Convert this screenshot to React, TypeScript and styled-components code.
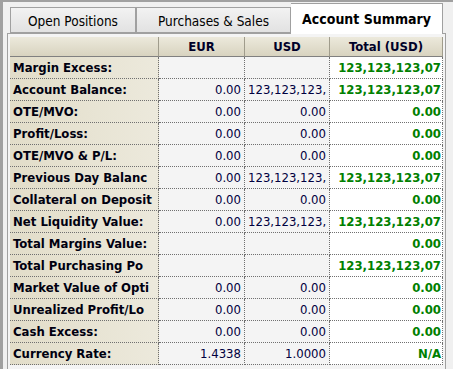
import React from 'react';
import styled, { createGlobalStyle } from 'styled-components';

const Global = createGlobalStyle`
  html, body { margin: 0; padding: 0; background: #f0f0f0; }
  body { font-family: "DejaVu Sans Condensed", "DejaVu Sans", Tahoma, sans-serif; }
`;

interface Row {
  label: string;
  eur: string;
  usd: string;
  total: string;
}

const rows: Row[] = [
  { label: 'Margin Excess:', eur: '', usd: '', total: '123,123,123,07' },
  { label: 'Account Balance:', eur: '0.00', usd: '123,123,123,', total: '123,123,123,07' },
  { label: 'OTE/MVO:', eur: '0.00', usd: '0.00', total: '0.00' },
  { label: 'Profit/Loss:', eur: '0.00', usd: '0.00', total: '0.00' },
  { label: 'OTE/MVO & P/L:', eur: '0.00', usd: '0.00', total: '0.00' },
  { label: 'Previous Day Balanc', eur: '0.00', usd: '123,123,123,', total: '123,123,123,07' },
  { label: 'Collateral on Deposit', eur: '0.00', usd: '0.00', total: '0.00' },
  { label: 'Net Liquidity Value:', eur: '0.00', usd: '123,123,123,', total: '123,123,123,07' },
  { label: 'Total Margins Value:', eur: '', usd: '', total: '0.00' },
  { label: 'Total Purchasing Po', eur: '', usd: '', total: '123,123,123,07' },
  { label: 'Market Value of Opti', eur: '0.00', usd: '0.00', total: '0.00' },
  { label: 'Unrealized Profit/Lo', eur: '0.00', usd: '0.00', total: '0.00' },
  { label: 'Cash Excess:', eur: '0.00', usd: '0.00', total: '0.00' },
  { label: 'Currency Rate:', eur: '1.4338', usd: '1.0000', total: 'N/A' },
];

export default function App() {
  return (
    <>
      <Global />
      <Frame>
        <Tabs>
          <Tab>Open Positions</Tab>
          <Tab $w={155}>Purchases &amp; Sales</Tab>
          <Tab $active $w={152}>Account Summary</Tab>
        </Tabs>
        <Panel>
          <Grid>
            <Head />
            <Head>EUR</Head>
            <Head>USD</Head>
            <Head>Total (USD)</Head>
            {rows.map((r) => (
              <React.Fragment key={r.label}>
                <Label>{r.label}</Label>
                <Value>{r.eur}</Value>
                <Value>{r.usd}</Value>
                <Total>{r.total}</Total>
              </React.Fragment>
            ))}
          </Grid>
        </Panel>
      </Frame>
    </>
  );
}

const Frame = styled.div`
  width: 453px;
  height: 369px;
  box-sizing: border-box;
  border-top: 2px solid #a0a0a0;
  border-left: 3px solid #a0a0a0;
  background: #f0f0f0;
  padding-left: 4px;
  overflow: hidden;
`;

const Tabs = styled.div`
  display: flex;
  align-items: flex-end;
  height: 31px;
  padding-left: 3px;
`;

const Tab = styled.div<{ $active?: boolean; $w?: number }>`
  box-sizing: border-box;
  width: ${(p) => p.$w ?? 126}px;
  height: ${(p) => (p.$active ? 31 : 26)}px;
  margin-bottom: ${(p) => (p.$active ? -1 : 0)}px;
  border: 1px solid #a0a0a0;
  border-bottom: ${(p) => (p.$active ? 'none' : '1px solid #a0a0a0')};
  border-left: ${(p) => (p.$active ? 'none' : '1px solid #a0a0a0')};
  &:first-child { border-left: 1px solid #a0a0a0; }
  background: ${(p) => (p.$active ? '#ffffff' : 'linear-gradient(#f2f2f2, #e2e2e2)')};
  display: flex;
  align-items: center;
  justify-content: center;
  font-size: ${(p) => (p.$active ? 14 : 13.5)}px;
  font-weight: ${(p) => (p.$active ? 'bold' : 'normal')};
  color: #000;
  position: relative;
  z-index: 1;
  padding-top: ${(p) => (p.$active ? 0 : 1)}px;
`;

const Panel = styled.div`
  box-sizing: border-box;
  width: 439px;
  height: 340px;
  border: 1px solid #a0a0a0;
  border-bottom: none;
  background: #f4f4f4;
  padding: 3px 2px 0 2px;
`;

const Grid = styled.div`
  display: grid;
  grid-template-columns: 149px 86px 85px 113px;
  grid-template-rows: 20px;
  grid-auto-rows: 22px;
`;

const Head = styled.div`
  box-sizing: border-box;
  background: linear-gradient(#ece9dc, #d8d3bf);
  border-right: 1px solid #a09c8c;
  border-bottom: 1px solid #808080;
  font-size: 13px;
  font-weight: bold;
  color: #000028;
  text-align: center;
  line-height: 19px;
`;

const Cell = styled.div`
  box-sizing: border-box;
  border-right: 1px dotted #707070;
  border-bottom: 1px dotted #707070;
  font-size: 13px;
  line-height: 21px;
  white-space: nowrap;
  overflow: hidden;
  padding: 0 3px;
`;

const Label = styled(Cell)`
  background: linear-gradient(90deg, #e2ddc9, #ece9dc);
  font-weight: bold;
  color: #000010;
  padding-left: 3px;
`;

const Value = styled(Cell)`
  background: #f4f4f4;
  color: #000040;
  text-align: right;
`;

const Total = styled(Cell)`
  background: #ffffff;
  color: #008000;
  font-weight: bold;
  text-align: right;
  padding-right: 1px;
`;
